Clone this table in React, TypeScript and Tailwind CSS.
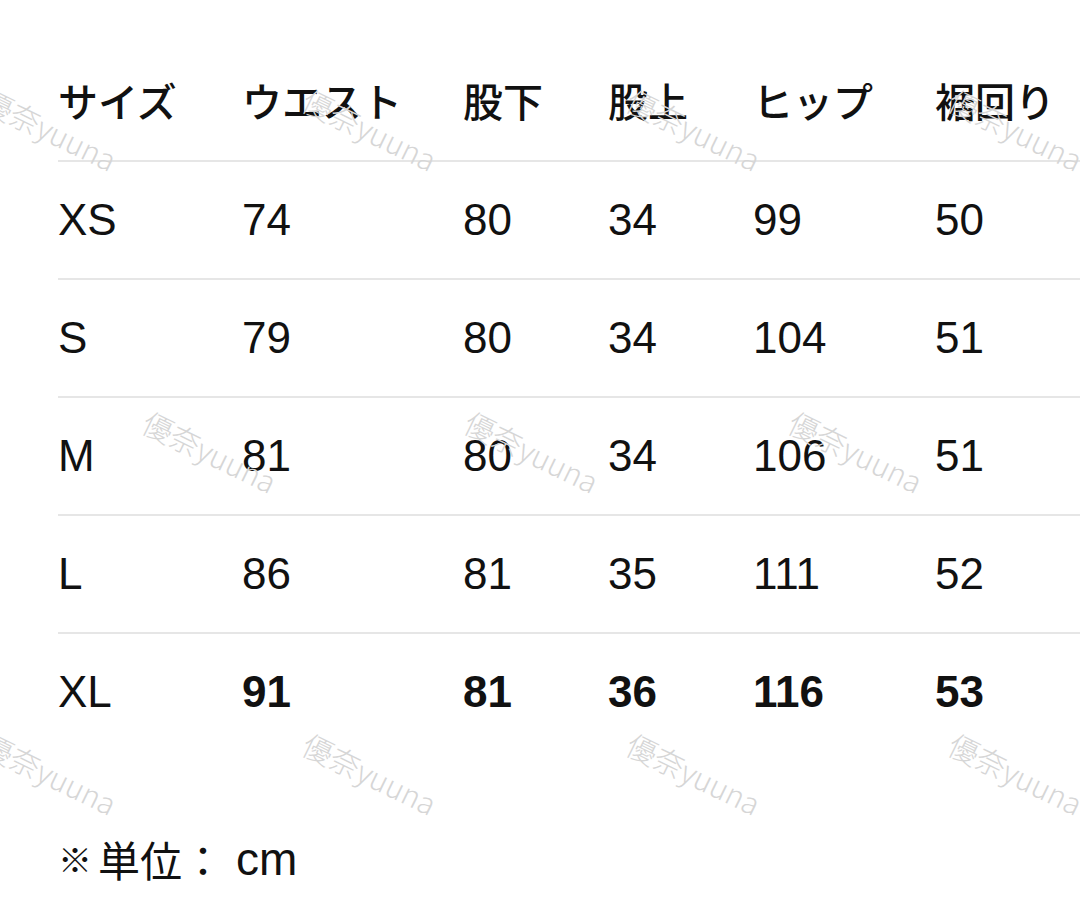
const headers = ["サイズ", "ウエスト", "股下", "股上", "ヒップ", "裾回り"];

const rows = [
  { size: "XS", values: ["74", "80", "34", "99", "50"] },
  { size: "S", values: ["79", "80", "34", "104", "51"] },
  { size: "M", values: ["81", "80", "34", "106", "51"] },
  { size: "L", values: ["86", "81", "35", "111", "52"] },
  { size: "XL", values: ["91", "81", "36", "116", "53"], bold: true },
];

// watermark stamps, written out so tailwind picks them up
const marks = [
  "left-[-8px] top-[84px]",
  "left-[312px] top-[84px]",
  "left-[636px] top-[84px]",
  "left-[958px] top-[84px]",
  "left-[152px] top-[406px]",
  "left-[474px] top-[406px]",
  "left-[798px] top-[406px]",
  "left-[-8px] top-[728px]",
  "left-[312px] top-[728px]",
  "left-[636px] top-[728px]",
  "left-[958px] top-[728px]",
];

const cols = "grid grid-cols-[184px_221px_145px_145px_182px_1fr] items-center";

export default function App() {
  return (
    <div className="relative h-[901px] w-[1080px] overflow-hidden bg-white font-['Liberation_Sans','Noto_Sans_CJK_JP',sans-serif] text-[#111]">
      <div className="pl-[58px] pt-[40px]">
        <div className={`${cols} h-[120px] font-['Noto_Sans_CJK_JP',sans-serif] text-[40px] font-medium leading-none`}>
          {headers.map((h) => (
            <div key={h}>{h}</div>
          ))}
        </div>
        {rows.map((row) => (
          <div key={row.size} className={`${cols} h-[118px] border-t-2 border-[#e6e6e6] text-[44px] leading-none`}>
            <div>{row.size}</div>
            {row.values.map((v, i) => (
              <div key={i} className={row.bold ? "font-bold" : ""}>
                {v}
              </div>
            ))}
          </div>
        ))}
        <div className="mt-[86px] flex items-center leading-none">
          <span className="mr-[6px] font-['Noto_Sans_CJK_JP',sans-serif] text-[34px] font-bold">※</span>
          <span className="font-['Noto_Sans_CJK_JP',sans-serif] text-[42px]">単位：</span>
          <span className="ml-[12px] text-[46px]">cm</span>
        </div>
      </div>

      {marks.map((pos, i) => (
        <div
          key={i}
          className={`pointer-events-none absolute ${pos} origin-top-left rotate-[26deg] whitespace-nowrap font-['Noto_Sans_CJK_JP',sans-serif] text-[30px] font-light leading-none text-[#d6d6d6]`}
        >
          優奈yuuna
        </div>
      ))}
    </div>
  );
}
